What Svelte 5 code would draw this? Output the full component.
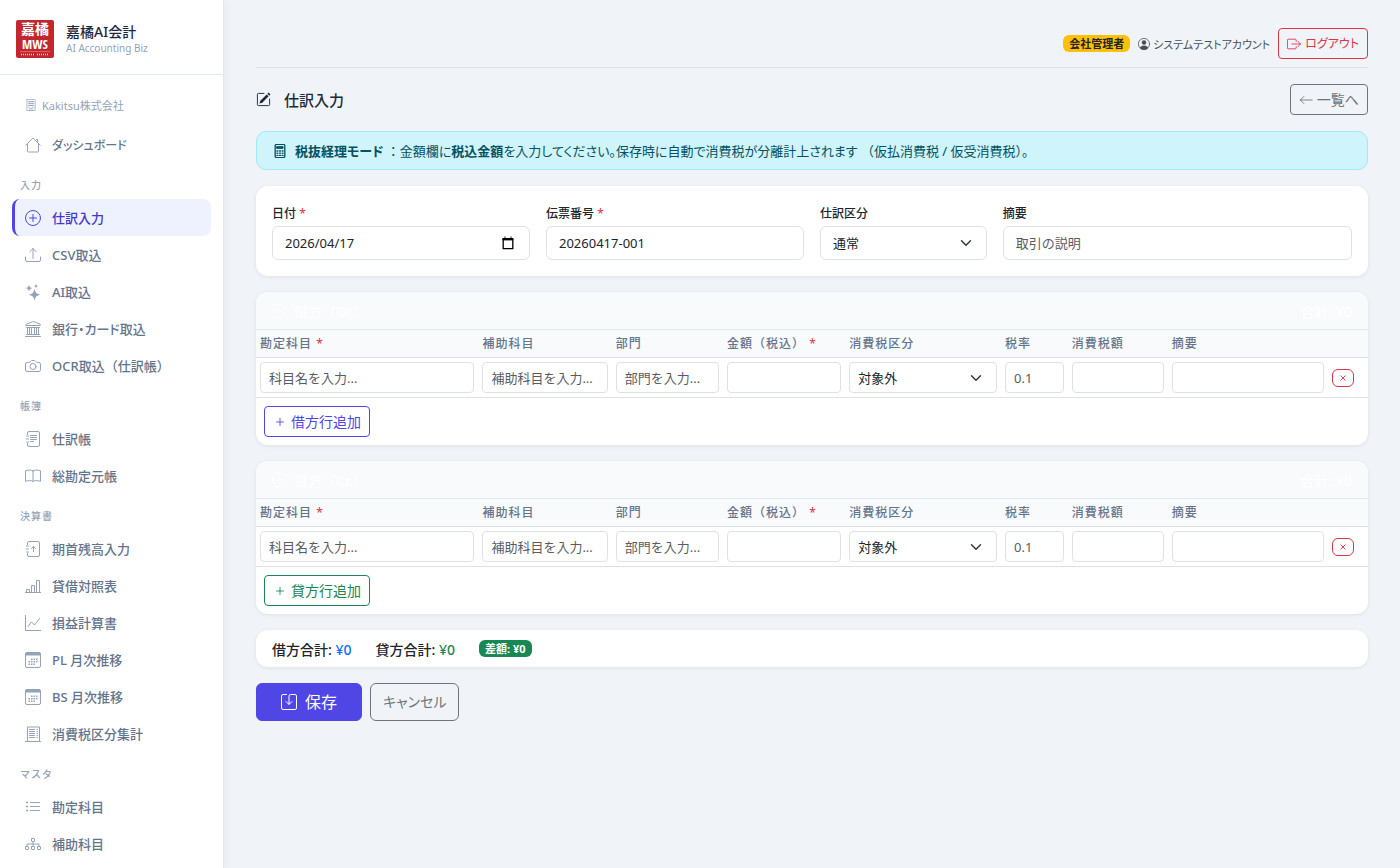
<script lang="ts">
  type Item = { label: string; icon: string; active?: boolean };
  type Group = { title: string; items: Item[] };

  const groups: Group[] = [
    {
      title: "入力",
      items: [
        { label: "仕訳入力", icon: "plusCircle", active: true },
        { label: "CSV取込", icon: "upload" },
        { label: "AI取込", icon: "stars" },
        { label: "銀行・カード取込", icon: "bank" },
        { label: "OCR取込（仕訳帳）", icon: "camera" }
      ]
    },
    {
      title: "帳簿",
      items: [
        { label: "仕訳帳", icon: "journalText" },
        { label: "総勘定元帳", icon: "book" }
      ]
    },
    {
      title: "決算書",
      items: [
        { label: "期首残高入力", icon: "journalUp" },
        { label: "貸借対照表", icon: "barChart" },
        { label: "損益計算書", icon: "graphUp" },
        { label: "PL 月次推移", icon: "calendar" },
        { label: "BS 月次推移", icon: "calendar" },
        { label: "消費税区分集計", icon: "receipt" }
      ]
    },
    {
      title: "マスタ",
      items: [
        { label: "勘定科目", icon: "list" },
        { label: "補助科目", icon: "diagram" }
      ]
    }
  ];

  const sides = [
    { key: "dr", title: "借方（Dr.）", add: "借方行追加", icon: "arrowLeftCircle" },
    { key: "cr", title: "貸方（Cr.）", add: "貸方行追加", icon: "arrowRightCircle" }
  ];

  const taxTypes = ["対象外", "課税売上", "課税仕入"];

  let date = $state("2026/04/17");
  let voucher = $state("20260417-001");
  let kind = $state("通常");
  let note = $state("");
</script>

{#snippet icon(name: string)}
  <svg class="icon" viewBox="0 0 16 16" fill="none" stroke="currentColor" stroke-linecap="round" stroke-linejoin="round" aria-hidden="true">
    {#if name === "plusCircle"}
      <circle cx="8" cy="8" r="7.5" /><path d="M8 4.5v7M4.5 8h7" />
    {:else if name === "upload"}
      <path d="M.5 10v3a1.5 1.5 0 0 0 1.5 1.5h12a1.5 1.5 0 0 0 1.5-1.5v-3M8 11.5V1.5M4.9 4.6 8 1.5l3.1 3.1" />
    {:else if name === "stars"}
      <g fill="currentColor" stroke="none">
        <path d="M9.2 5.7q.3-.7.6 0l.7 2.1a3 3 0 0 0 1.9 1.9l2.1.7q.6.3 0 .6l-2.1.7a3 3 0 0 0-1.9 1.9l-.7 2.1q-.3.6-.6 0l-.7-2.1a3 3 0 0 0-1.9-1.9l-2.1-.7q-.6-.3 0-.6l2.1-.7a3 3 0 0 0 1.9-1.9z" />
        <path d="M3.8 1.2q.2-.5.4 0l.4 1.2a2 2 0 0 0 1.1 1.1l1.2.4q.5.2 0 .4l-1.2.4a2 2 0 0 0-1.1 1.1L4.2 7q-.2.5-.4 0l-.4-1.2a2 2 0 0 0-1.1-1.1l-1.2-.4q-.5-.2 0-.4l1.2-.4a2 2 0 0 0 1.1-1.1z" />
        <path d="M10.9.2q.1-.3.2 0l.3.8q.2.6.7.8l.8.2q.3.1 0 .3l-.8.3q-.5.2-.7.7l-.3.8q-.1.3-.2 0l-.3-.8q-.2-.5-.7-.7l-.8-.3q-.3-.1 0-.2l.8-.3q.5-.2.7-.7z" />
      </g>
    {:else if name === "bank"}
      <path d="M8 .6.8 3.5v1h14.4v-1zM1.5 6.5h13M2.5 6.5v7M4.500 6.5v7M6.5 6.5v7M9.5 6.5v7M11.5 6.5v7M13.5 6.5v7M1.5 13.5h13M.5 15.5h15" />
    {:else if name === "camera"}
      <path d="M15.5 12a1.5 1.5 0 0 1-1.5 1.5H2A1.5 1.5 0 0 1 .5 12V6A1.5 1.5 0 0 1 2 4.5h1.2a3 3 0 0 0 2.1-.9l.8-.8a1 1 0 0 1 .7-.3h2.4a1 1 0 0 1 .7.3l.8.8a3 3 0 0 0 2.1.9H14A1.5 1.5 0 0 1 15.5 6z" />
      <circle cx="8" cy="8.5" r="3" />
    {:else if name === "journalText" || name === "journalUp"}
      <path d="M2.5 3.5V2A1.5 1.5 0 0 1 4 .5h9A1.5 1.5 0 0 1 14.5 2v12a1.5 1.5 0 0 1-1.5 1.5H4A1.5 1.5 0 0 1 2.5 14v-1.5M1.5 5h2M1.5 8h2M1.5 11h2" />
      {#if name === "journalText"}
        <path d="M5.5 4.5h6M5.5 6.5h6M5.5 8.5h6M5.5 10.5h3" />
      {:else}
        <path d="M8.5 10.5v-5M6.5 7.5l2-2 2 2" />
      {/if}
    {:else if name === "book"}
      <path d="M8 2.8C6.5 1.8 3.5 1.8.5 2.8v10.5c3-.9 6-1 7.5.1 1.5-1.1 4.5-1 7.5-.1V2.8c-3-1-6-1-7.5 0zM8 2.8v10.6" />
    {:else if name === "barChart"}
      <path d="M0 14.5h16M1.5 14.5v-3h3v3M6.5 14.5v-7h3v7M11.5 14.5v-12h3v12" />
    {:else if name === "graphUp"}
      <path d="M.5.5v15H16M3 11.5l3.5-4.5 3 3 5-6.5" />
    {:else if name === "calendar"}
      <rect x=".5" y=".5" width="15" height="15" rx="1.5" />
      <path d="M1 1h14v2H1z" fill="currentColor" />
      <g fill="currentColor" stroke="none">
        <path d="M6 6.500h1.500V8H6zM8.500 6.500H10V8H8.500zM11 6.500h1.500V8H11zM3.500 9H5v1.500H3.500zM6 9h1.500v1.500H6zM8.500 9H10v1.500H8.500zM11 9h1.500v1.500H11zM3.500 11.500H5V13H3.500zM6 11.500h1.500V13H6zM8.500 11.500H10V13H8.500z" />
      </g>
    {:else if name === "receipt"}
      <path d="M2.500 15V1h12v14M.5 15.500h15M4.500 3.500h5M4.500 5.500h5M4.500 7.500h5M4.500 9.500h5M4.500 11.500h5M12 3.500h.5M12 5.500h.5M12 7.500h.5M12 9.500h.5M12 11.500h.5" />
    {:else if name === "list"}
      <path d="M5.500 3.500h9M5.500 7.500h9M5.500 11.500h9" />
      <g fill="currentColor" stroke="none"><circle cx="2" cy="3.500" r="1" /><circle cx="2" cy="7.500" r="1" /><circle cx="2" cy="11.500" r="1" /></g>
    {:else if name === "diagram"}
      <rect x="6.500" y="2.500" width="3" height="3" rx=".5" /><rect x=".5" y="10.500" width="3" height="3" rx=".5" />
      <rect x="6.500" y="10.500" width="3" height="3" rx=".5" /><rect x="12.500" y="10.500" width="3" height="3" rx=".5" />
      <path d="M8 5.500v5M2 10V8h12v2" />
    {:else if name === "house"}
      <path d="m.8 8.200 6.800-6.900a.6.6 0 0 1 .8 0l6.800 6.900M2.500 7v7a1 1 0 0 0 1 1h9a1 1 0 0 0 1-1V7M11.500 2.500h1v2" />
    {:else if name === "building"}
      <path d="M3 .5h10a.5.5 0 0 1 .5.5v14.500h-11V1a.5.5 0 0 1 .5-.5zM6.500 15.500v-3h3v3" />
      <path d="M5 3.500h1M7.500 3.500h1M10 3.500h1M5 6h1M7.500 6h1M10 6h1M5 8.500h1M7.500 8.500h1M10 8.500h1M5 11h.5M10.500 11h.5" stroke-width="1.500" />
    {:else if name === "person"}
      <circle cx="8" cy="8" r="7.500" />
      <g fill="currentColor" stroke="none"><circle cx="8" cy="6" r="3" /><path d="M2.400 13.200C3.200 11.200 5 10 8 10s4.800 1.200 5.600 3.200A8 8 0 0 1 8 16a8 8 0 0 1-5.600-2.800z" /></g>
    {:else if name === "logout"}
      <path d="M10.500 5V3.500a1 1 0 0 0-1-1h-8a1 1 0 0 0-1 1v9a1 1 0 0 0 1 1h8a1 1 0 0 0 1-1V11M5.500 8h10M12.500 5l3 3-3 3" />
    {:else if name === "arrowLeft"}
      <path d="M15 8H1.500M5.500 4l-4 4 4 4" />
    {:else if name === "pencil"}
      <path d="M8.500 1.500h-6a1 1 0 0 0-1 1v11a1 1 0 0 0 1 1h11a1 1 0 0 0 1-1V7.500" />
      <path d="m13.400.6 2 2-1.300 1.300-2-2zM11.400 2.600l2 2-6.700 6.800-3 .9.900-3z" fill="currentColor" stroke="none" />
    {:else if name === "calculator"}
      <rect x="2.500" y=".5" width="11" height="15" rx="1.500" stroke-width="1.500" />
      <path d="M4.500 3h7v2h-7z" fill="currentColor" />
      <path d="M4.500 8h1M7.500 8h1M10.500 8h1M4.500 10.500h1M7.500 10.500h1M10.500 10.500h1M4.500 13h1M7.500 13h1M10.500 13h1" stroke-width="1.500" />
    {:else if name === "arrowLeftCircle"}
      <circle cx="8" cy="8" r="7.500" /><path d="M11.500 8h-7M7.500 5l-3 3 3 3" />
    {:else if name === "arrowRightCircle"}
      <circle cx="8" cy="8" r="7.500" /><path d="M4.500 8h7M8.500 5l3 3-3 3" />
    {:else if name === "plus"}
      <path d="M8 4v8M4 8h8" />
    {:else if name === "x"}
      <path d="m4.500 4.500 7 7M11.500 4.500l-7 7" stroke-width="1.500" />
    {:else if name === "save"}
      <path d="M5.500.5H2A1.500 1.500 0 0 0 .5 2v12A1.500 1.500 0 0 0 2 15.500h12a1.500 1.500 0 0 0 1.500-1.500V2A1.500 1.500 0 0 0 14 .5H9.500a1.500 1.500 0 0 0-1.500 1.500v8M5 7.500l3 3 3-3" />
    {:else if name === "date"}
      <path d="M2.500 3h11v11.500h-11z" stroke-width="1.500" /><path d="M2.500 3h11v1.500h-11zM4.500 1v2M11.500 1v2" fill="currentColor" />
    {/if}
  </svg>
{/snippet}

<div class="app">
  <aside class="sidebar">
    <div class="brand">
      <svg class="logo" viewBox="0 0 38 38" role="img" aria-label="嘉橘 MWS">
        <rect width="38" height="38" rx="2" fill="#c1272d" />
        <text class="logo-kanji" x="19" y="14">嘉橘</text>
        <text class="logo-latin" x="19" y="29">MWS</text>
        <path d="M4 31.500h30" stroke="#e9a5a8" stroke-width=".5" />
        <path d="M5 34.500h13M21 34.500h12" stroke="#f3cfd0" stroke-width="1.500" stroke-dasharray="1 1" />
      </svg>
      <div>
        <div class="brand-name">嘉橘AI会計</div>
        <div class="brand-sub">AI Accounting Biz</div>
      </div>
    </div>

    <nav>
      <div class="company">{@render icon("building")}Kakitsu株式会社</div>
      <a class="nav-link home kana" href="#dashboard">{@render icon("house")}ダッシュボード</a>
      {#each groups as group}
        <div class="nav-title">{group.title}</div>
        {#each group.items as item}
          <a class="nav-link" class:active={item.active} class:kana={item.icon === "bank"} href="#{item.icon}">
            {@render icon(item.icon)}{item.label}
          </a>
        {/each}
      {/each}
    </nav>
  </aside>

  <main>
    <header class="topbar">
      <span class="badge role">会社管理者</span>
      <span class="user kana">{@render icon("person")}システムテストアカウント</span>
      <button class="btn danger kana" type="button">{@render icon("logout")}ログアウト</button>
    </header>

    <div class="page-head">
      <h1>{@render icon("pencil")}仕訳入力</h1>
      <a class="btn secondary kana" href="#list">{@render icon("arrowLeft")}一覧へ</a>
    </div>

    <div class="alert">
      {@render icon("calculator")}
      <p><strong>税抜経理モード</strong> <span class="wide">：</span>金額欄に<strong>税込金額</strong>を入力してください。保存時に自動で消費税が分離計上されます <span class="wide">（仮払消費税 / 仮受消費税）。</span></p>
    </div>

    <section class="card fields">
      <div class="field three">
        <label for="date">日付 <em>*</em></label>
        <div class="control date">
          <input id="date" type="text" bind:value={date} />
          <button type="button" aria-label="カレンダー">{@render icon("date")}</button>
        </div>
      </div>
      <div class="field three">
        <label for="voucher">伝票番号 <em>*</em></label>
        <input id="voucher" class="control" type="text" bind:value={voucher} />
      </div>
      <div class="field two">
        <label for="kind">仕訳区分</label>
        <select id="kind" class="control" bind:value={kind}>
          <option>通常</option>
          <option>決算</option>
        </select>
      </div>
      <div class="field four">
        <label for="note">摘要</label>
        <input id="note" class="control" type="text" placeholder="取引の説明" bind:value={note} />
      </div>
    </section>

    {#each sides as side}
      <section class="card entry">
        <div class="entry-head">
          <span class="entry-title">{@render icon(side.icon)}{side.title}</span>
          <span>合計: ¥0</span>
        </div>
        <table>
          <colgroup>
            <col class="w20" /><col class="w12" /><col class="w10" /><col class="w11" />
            <col class="w14" /><col class="w6" /><col class="w9" /><col /><col class="action" />
          </colgroup>
          <thead>
            <tr>
              <th>勘定科目 <em>*</em></th>
              <th>補助科目</th>
              <th>部門</th>
              <th>金額（税込） <em>*</em></th>
              <th>消費税区分</th>
              <th>税率</th>
              <th>消費税額</th>
              <th>摘要</th>
              <th></th>
            </tr>
          </thead>
          <tbody>
            <tr>
              <td><input class="control sm" type="text" aria-label="勘定科目" placeholder="科目名を入力..." /></td>
              <td><input class="control sm" type="text" aria-label="補助科目" placeholder="補助科目を入力..." /></td>
              <td><input class="control sm" type="text" aria-label="部門" placeholder="部門を入力..." /></td>
              <td><input class="control sm" type="text" aria-label="金額（税込）" /></td>
              <td>
                <select class="control sm" aria-label="消費税区分">
                  {#each taxTypes as tax}<option>{tax}</option>{/each}
                </select>
              </td>
              <td><input class="control sm" type="text" aria-label="税率" placeholder="0.1" /></td>
              <td><input class="control sm" type="text" aria-label="消費税額" /></td>
              <td><input class="control sm" type="text" aria-label="摘要" /></td>
              <td><button class="remove" type="button" aria-label="行を削除">{@render icon("x")}</button></td>
            </tr>
          </tbody>
        </table>
        <div class="entry-foot">
          <button class="btn {side.key}" type="button">{@render icon("plus")}{side.add}</button>
        </div>
      </section>
    {/each}

    <section class="card totals">
      <span>借方合計: <b class="blue">¥0</b></span>
      <span>貸方合計: <b class="green">¥0</b></span>
      <span class="badge diff">差額: ¥0</span>
    </section>

    <div class="actions">
      <button class="btn large primary" type="submit">{@render icon("save")}保存</button>
      <a class="btn large secondary cancel kana" href="#cancel">キャンセル</a>
    </div>
  </main>
</div>

<style>
  :global(body) {
    background: #f0f4f8;
    color: #212529;
    font-family: "Noto Sans", "Noto Sans CJK JP", sans-serif;
    font-size: 14px;
  }

  * {
    box-sizing: border-box;
  }

  .app {
    display: flex;
    min-height: 100vh;
  }

  .icon {
    flex: none;
    width: 16px;
    height: 16px;
  }

  /* proportional kana, as in the UI fonts */
  .kana {
    font-feature-settings: "palt";
  }

  em {
    color: #dc3545;
    font-style: normal;
    font-weight: 400;
  }

  .sidebar {
    position: sticky;
    top: 0;
    flex: none;
    width: 224px;
    height: 100vh;
    overflow: hidden;
    border-right: 1px solid #e2e8f0;
    background: #fff;
    box-shadow: 2px 0 8px rgba(0, 0, 0, 0.04);
  }

  .brand {
    display: flex;
    align-items: center;
    gap: 12px;
    height: 75px;
    padding: 4px 16px 0;
    border-bottom: 1px solid #e2e8f0;
  }

  .logo {
    width: 38px;
    height: 38px;
    overflow: visible;
  }

  .logo text {
    fill: #fff;
    font-weight: 700;
    text-anchor: middle;
  }

  .logo-kanji {
    font-family: "Noto Sans CJK JP", sans-serif;
    font-size: 14px;
  }

  .logo-latin {
    font-family: "Open Sans Condensed", "DejaVu Sans Condensed", "Liberation Sans", sans-serif;
    font-size: 13px;
  }

  .brand-name {
    color: #1e293b;
    font-size: 14px;
    font-weight: 500;
    line-height: 18px;
  }

  .brand-sub {
    color: #94a3b8;
    font-size: 10px;
    line-height: 14px;
  }

  nav {
    padding: 20px 12px;
  }

  .company {
    display: flex;
    align-items: center;
    gap: 5px;
    height: 20px;
    margin-bottom: 11px;
    padding-left: 13px;
    color: #94a3b8;
    font-size: 11px;
  }

  .company .icon {
    width: 12px;
    height: 12px;
  }

  .nav-link {
    display: flex;
    align-items: center;
    gap: 11px;
    height: 37px;
    padding-left: 10px;
    border-left: 3px solid transparent;
    border-radius: 8px;
    color: #64748b;
    font-size: 13px;
    font-weight: 500;
    text-decoration: none;
  }

  .nav-link .icon {
    color: #94a3b8;
  }

  .nav-link.home {
    font-size: 12px;
  }

  .nav-link.active {
    border-left-color: #4f46e5;
    background: #eef2ff;
    color: #4338ca;
  }

  .nav-link.active .icon {
    color: #4f46e5;
  }

  .nav-title {
    height: 36px;
    padding: 14px 8px 6px;
    color: #94a3b8;
    font-size: 10px;
    font-weight: 500;
    letter-spacing: 1px;
    line-height: 16px;
  }

  main {
    flex: 1;
    min-width: 0;
    padding: 28px 32px;
  }

  .topbar {
    display: flex;
    align-items: center;
    justify-content: flex-end;
    gap: 8px;
    margin-bottom: 16px;
    padding-bottom: 8px;
    border-bottom: 1px solid #dee2e6;
  }

  .badge {
    padding: 0 6px;
    border-radius: 6px;
    font-size: 11px;
    font-weight: 700;
    line-height: 17px;
  }

  .role {
    background: #ffc107;
  }

  .user {
    display: flex;
    align-items: center;
    gap: 3px;
    color: #495057;
    font-size: 11px;
  }

  .user .icon {
    width: 12px;
    height: 12px;
  }

  .btn {
    display: inline-flex;
    align-items: center;
    gap: 4px;
    height: 31px;
    padding: 0 8px;
    border: 1px solid currentColor;
    border-radius: 4px;
    background: transparent;
    font-family: inherit;
    font-size: 14px;
    line-height: 18px;
    text-decoration: none;
    cursor: pointer;
  }

  .btn .icon {
    width: 14px;
    height: 14px;
  }

  .danger {
    color: #dc3545;
    font-size: 12px;
  }

  .secondary {
    color: #6c757d;
  }

  .dr {
    color: #4f46e5;
  }

  .cr {
    color: #198754;
  }

  .page-head {
    display: flex;
    align-items: center;
    justify-content: space-between;
    margin-bottom: 16px;
  }

  h1 {
    display: flex;
    align-items: center;
    gap: 13px;
    margin: 0;
    color: #1e293b;
    font-size: 15px;
    font-weight: 500;
  }

  h1 .icon {
    width: 15px;
    height: 15px;
  }

  .alert {
    display: flex;
    align-items: center;
    gap: 8px;
    min-height: 39px;
    margin-bottom: 16px;
    padding: 0 16px;
    border: 1px solid #9eeaf9;
    border-radius: 10px;
    background: #cff4fc;
    color: #055160;
  }

  .alert .icon {
    width: 14px;
    height: 14px;
  }

  .alert p {
    margin: 0;
    font-size: 13px;
    font-feature-settings: "palt";
  }

  .alert .wide {
    font-feature-settings: normal;
  }

  .card {
    margin-bottom: 16px;
    overflow: hidden;
    border-radius: 12px;
    background: #fff;
    box-shadow: 0 1px 4px rgba(0, 0, 0, 0.08);
  }

  .fields {
    display: grid;
    grid-template-columns: repeat(12, 1fr);
    gap: 16px;
    padding: 16px;
  }

  .field label {
    display: block;
    font-size: 12px;
    font-weight: 500;
    line-height: 24px;
  }

  .three {
    grid-column: span 3;
  }

  .two {
    grid-column: span 2;
  }

  .four {
    grid-column: span 4;
  }

  .control {
    display: block;
    width: 100%;
    height: 34px;
    padding: 0 12px;
    border: 1px solid #dee2e6;
    border-radius: 6px;
    background: #fff;
    color: #212529;
    font-family: inherit;
    font-size: 13px;
  }

  .control::placeholder {
    color: #595c5f;
    opacity: 1;
  }

  .control.sm {
    height: 31px;
    padding: 0 8px;
    border-radius: 4px;
  }

  select.control {
    appearance: none;
    background: #fff
      url("data:image/svg+xml,%3csvg xmlns='http://www.w3.org/2000/svg' viewBox='0 0 16 16'%3e%3cpath fill='none' stroke='%23343a40' stroke-linecap='round' stroke-linejoin='round' stroke-width='2' d='m2 5 6 6 6-6'/%3e%3c/svg%3e")
      no-repeat right 14px center / 12px;
  }

  .date {
    display: flex;
    align-items: center;
  }

  .date input {
    flex: 1;
    min-width: 0;
    padding: 0;
    border: 0;
    outline: 0;
    color: inherit;
    font: inherit;
  }

  .date button {
    display: flex;
    padding: 0 2px;
    border: 0;
    background: none;
    color: #000;
  }

  .date .icon {
    width: 14px;
    height: 14px;
  }

  .entry-head {
    display: flex;
    align-items: center;
    justify-content: space-between;
    height: 38px;
    padding: 0 16px;
    border-bottom: 1px solid #e2e8f0;
    background: #f8fafc;
    color: #fff;
    font-size: 14px;
    font-weight: 500;
  }

  .entry-title {
    display: flex;
    align-items: center;
    gap: 8px;
  }

  .entry-title .icon {
    width: 14px;
    height: 14px;
  }

  table {
    width: 100%;
    border-collapse: separate;
    border-spacing: 0;
    table-layout: fixed;
  }

  .w20 {
    width: 20%;
  }

  .w12 {
    width: 12%;
  }

  .w10 {
    width: 10%;
  }

  .w11 {
    width: 11%;
  }

  .w14 {
    width: 14%;
  }

  .w6 {
    width: 6%;
  }

  .w9 {
    width: 9%;
  }

  .action {
    width: 40px;
  }

  th {
    height: 28px;
    padding: 0 4px;
    border-bottom: 1px solid #dee2e6;
    background: #f8fafc;
    color: #64748b;
    font-size: 12px;
    font-weight: 500;
    letter-spacing: 1px;
    line-height: 16px;
    text-align: left;
    white-space: nowrap;
  }

  td {
    height: 40px;
    padding: 4px;
    border-bottom: 1px solid #dee2e6;
  }

  .remove {
    display: flex;
    align-items: center;
    justify-content: center;
    width: 22px;
    height: 18px;
    padding: 0;
    border: 1px solid #dc3545;
    border-radius: 6px;
    background: transparent;
    color: #dc3545;
  }

  .remove .icon {
    width: 10px;
    height: 10px;
  }

  .entry-foot {
    padding: 8px;
  }

  .totals {
    display: flex;
    align-items: center;
    gap: 24px;
    min-height: 37px;
    padding: 0 16px;
    font-weight: 500;
  }

  .totals b {
    font-weight: 500;
  }

  .blue {
    color: #0d6efd;
  }

  .green {
    color: #198754;
  }

  .diff {
    background: #198754;
    color: #fff;
  }

  .actions {
    display: flex;
    gap: 8px;
  }

  .large {
    height: 38px;
    padding: 0 12px;
    border-radius: 6px;
    font-size: 16px;
  }

  .cancel {
    font-size: 14px;
  }

  .primary {
    gap: 8px;
    padding: 0 24px;
    border-color: #4f46e5;
    background: #4f46e5;
    color: #fff;
  }

  .primary .icon {
    width: 16px;
    height: 16px;
  }
</style>
